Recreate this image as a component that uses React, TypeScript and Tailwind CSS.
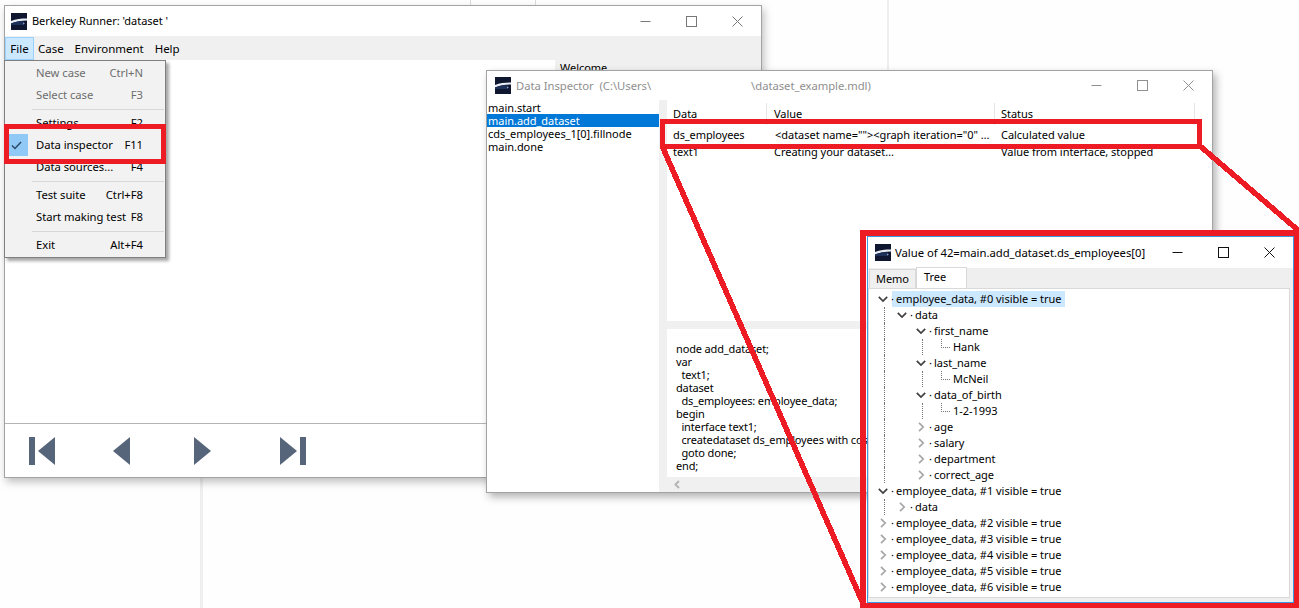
import type { ReactNode } from 'react';

const FONT = "font-['Noto_Sans','Open_Sans',sans-serif]";

function Logo() {
  return (
    <svg viewBox="0 0 16 17" className="h-[17px] w-4 shrink-0">
      <rect width="16" height="17" fill="#0e1630" />
      <path d="M0 8 C5 6 10 5.5 16 5.5 L16 7.5 C10 7.5 5 8.5 0 10.5Z" fill="#e8edf5" />
      <path d="M0 10.5 C5 8.5 9 8 13 8.5 L13 12 L0 12Z" fill="#1d3058" />
      <path d="M12 9.5 L14 10.5 L12 11.5Z" fill="#8aa0c0" />
    </svg>
  );
}

function WindowButtons({ color }: { color: string }) {
  return (
    <div className="flex items-center pr-px" style={{ color }}>
      <div className="flex w-[46px] justify-center">
        <svg width="11" height="11" viewBox="0 0 11 11"><path d="M0.5 5.5H10.5" stroke="currentColor" /></svg>
      </div>
      <div className="flex w-[46px] justify-center">
        <svg width="11" height="11" viewBox="0 0 11 11"><rect x="0.5" y="0.5" width="10" height="10" fill="none" stroke="currentColor" /></svg>
      </div>
      <div className="flex w-[46px] justify-center">
        <svg width="11" height="11" viewBox="0 0 11 11"><path d="M0.5 0.5L10.5 10.5M10.5 0.5L0.5 10.5" stroke="currentColor" /></svg>
      </div>
    </div>
  );
}

type MenuItem = { label?: string; key?: string; disabled?: boolean; checked?: boolean };

const MENU: MenuItem[] = [
  { label: 'New case', key: 'Ctrl+N', disabled: true },
  { label: 'Select case', key: 'F3', disabled: true },
  {},
  { label: 'Settings', key: 'F2' },
  { label: 'Data inspector', key: 'F11', checked: true },
  { label: 'Data sources...', key: 'F4' },
  {},
  { label: 'Test suite', key: 'Ctrl+F8' },
  { label: 'Start making test', key: 'F8' },
  {},
  { label: 'Exit', key: 'Alt+F4' },
];

function FileMenu() {
  return (
    <div className="absolute left-[4px] top-[60px] z-10 w-[162px] border border-[#808080] bg-[#f2f2f2] py-[1px] text-[11.25px] shadow-[3px_3px_3px_rgba(0,0,0,0.35)]">
      {MENU.map((m, i) =>
        m.label ? (
          <div key={i} className={`flex h-[22px] items-center ${m.disabled ? 'text-[#6d6d6d]' : 'text-black'}`}>
            <div className="flex h-[22px] w-[23px] items-center justify-center">
              {m.checked && (
                <div className="flex h-[22px] w-[23px] items-center justify-center bg-[#90c8f6]">
                  <svg width="11" height="9" viewBox="0 0 11 9"><path d="M1 4.5L4 7.5L10 1" fill="none" stroke="#2c4a66" strokeWidth="1.5" /></svg>
                </div>
              )}
            </div>
            <span className="ml-[8px] flex-1 whitespace-nowrap">{m.label}</span>
            <span className="mr-[22px] whitespace-nowrap">{m.key}</span>
          </div>
        ) : (
          <div key={i} className="my-[2.5px] ml-[27px] mr-px h-px bg-[#d7d7d7]" />
        ),
      )}
    </div>
  );
}

function RunnerWindow() {
  return (
    <div className="absolute left-[4px] top-[5px] flex h-[473px] w-[758px] flex-col border border-[#a3a3a3] bg-white shadow-[2px_4px_8px_rgba(0,0,0,0.25)]">
      <div className="flex h-[30px] items-center justify-between bg-white">
        <div className="flex items-center gap-[5px] pl-[6px]">
          <Logo />
          <span>Berkeley Runner: 'dataset '</span>
        </div>
        <WindowButtons color="#777" />
      </div>
      <div className="flex h-[24px] items-center bg-[#f0f0f0] pt-px text-[11.5px]">
        <div className="flex h-[23px] w-[29px] items-center justify-center border border-[#99d1ff] bg-[#cce8ff]">File</div>
        <span className="ml-[4px]">Case</span>
        <span className="ml-[11px]">Environment</span>
        <span className="ml-[11px]">Help</span>
      </div>
      <div className="flex flex-1">
        <div className="w-[550px]" />
        <div className="w-[3px] bg-[#f0f0f0]" />
        <div className="flex-1">
          <div className="flex h-[11px] items-start bg-[#f0f0f0] pl-[2px] leading-[15px]">Welcome</div>
        </div>
      </div>
      <div className="flex h-[54px] items-center border-t border-[#b4b4b4] pl-[24px]">
        <svg width="27" height="28" viewBox="0 0 27 28" fill="#566579"><rect width="6" height="28" /><path d="M9 14L26 0V28Z" /></svg>
        <svg className="ml-[57px]" width="17" height="28" viewBox="0 0 17 28" fill="#566579"><path d="M0 14L17 0V28Z" /></svg>
        <svg className="ml-[64px]" width="17" height="28" viewBox="0 0 17 28" fill="#566579"><path d="M17 14L0 0V28Z" /></svg>
        <svg className="ml-[69px]" width="27" height="28" viewBox="0 0 27 28" fill="#566579"><rect x="20" width="6" height="28" /><path d="M17 14L0 0V28Z" /></svg>
      </div>
    </div>
  );
}

const CODE = [
  'node add_dataset;',
  'var',
  '  text1;',
  'dataset',
  '  ds_employees: employee_data;',
  'begin',
  '  interface text1;',
  '  createdataset ds_employees with cds_employees_1;',
  '  goto done;',
  'end;',
];

const STEPS = ['main.start', 'main.add_dataset', 'cds_employees_1[0].fillnode', 'main.done'];

function InspectorWindow() {
  return (
    <div className="absolute left-[486px] top-[70px] flex h-[423px] w-[727px] flex-col border border-[#a3a3a3] bg-white shadow-[3px_4px_8px_rgba(0,0,0,0.3)]">
      <div className="flex h-[29px] shrink-0 items-center justify-between">
        <div className="flex items-center gap-[5px] pl-[8px] text-[11.25px] text-[#8f8f8f]">
          <Logo />
          <span className="whitespace-pre">Data Inspector  (C:\Users\</span>
          <span className="ml-[95px]">\dataset_example.mdl)</span>
        </div>
        <WindowButtons color="#8f8f8f" />
      </div>
      <div className="flex min-h-0 flex-1">
        <div className="w-[172px] pt-px leading-[13px]">
          {STEPS.map((s, i) => (
            <div key={s} className={`h-[13px] whitespace-nowrap pl-px ${i === 1 ? 'bg-[#0078d7] text-white' : ''}`}>{s}</div>
          ))}
        </div>
        <div className="w-[8px] bg-[#f0f0f0]" />
        <div className="flex min-w-0 flex-1 flex-col">
          <div className="h-[221px] shrink-0 pt-[3px]">
            <div className="flex h-[22px] items-end leading-[15px]">
              <div className="h-[22px] w-[100px] border-r border-[#e5e5e5] pl-[6px] pt-[3px]">Data</div>
              <div className="h-[22px] w-[228px] border-r border-[#e5e5e5] pl-[7px] pt-[3px]">Value</div>
              <div className="h-[22px] w-[200px] border-r border-[#e5e5e5] pl-[6px] pt-[3px]">Status</div>
            </div>
            <div className="mt-[1px] flex h-[17px] items-center whitespace-nowrap">
              <div className="w-[100px] pl-[6px] tracking-[-0.1px]">ds_employees</div>
              <div className="w-[228px] overflow-hidden pl-[8px]">{'<dataset name=""><graph iteration="0" …'}</div>
              <div className="pl-[6px]">Calculated value</div>
            </div>
            <div className="flex h-[17px] items-center whitespace-nowrap">
              <div className="w-[100px] pl-[6px]">text1</div>
              <div className="w-[228px] pl-[7px]">Creating your dataset…</div>
              <div className="pl-[6px]">Value from interface, stopped</div>
            </div>
          </div>
          <div className="h-[8px] shrink-0 bg-[#f0f0f0]" />
          <div className="min-h-0 flex-1 overflow-hidden whitespace-pre pl-[9px] pt-[13px] leading-[13px] tracking-[-0.15px]">
            {CODE.map((c) => <div key={c} className="h-[13px]">{c}</div>)}
          </div>
          <div className="flex h-[15px] shrink-0 items-center bg-[#f0f0f0] pl-[7px]">
            <svg width="6" height="9" viewBox="0 0 6 9"><path d="M5 1L1.5 4.5L5 8" fill="none" stroke="#b5b5b5" strokeWidth="2" /></svg>
          </div>
        </div>
      </div>
    </div>
  );
}

type Row = { text: string; depth: number; open?: boolean; leaf?: boolean; guides?: number[]; selected?: boolean };

const emp = (n: number) => `employee_data, #${n} visible = true`;

const ROWS: Row[] = [
  { text: emp(0), depth: 0, open: true, selected: true },
  { text: 'data', depth: 1, open: true, guides: [0] },
  { text: 'first_name', depth: 2, open: true, guides: [0] },
  { text: 'Hank', depth: 3, leaf: true, guides: [0, 1] },
  { text: 'last_name', depth: 2, open: true, guides: [0] },
  { text: 'McNeil', depth: 3, leaf: true, guides: [0, 1] },
  { text: 'data_of_birth', depth: 2, open: true, guides: [0] },
  { text: '1-2-1993', depth: 3, leaf: true, guides: [0, 1] },
  { text: 'age', depth: 2, guides: [0] },
  { text: 'salary', depth: 2, guides: [0] },
  { text: 'department', depth: 2, guides: [0] },
  { text: 'correct_age', depth: 2, guides: [0] },
  { text: emp(1), depth: 0, open: true },
  { text: 'data', depth: 1, guides: [0] },
  { text: emp(2), depth: 0 },
  { text: emp(3), depth: 0 },
  { text: emp(4), depth: 0 },
  { text: emp(5), depth: 0 },
  { text: emp(6), depth: 0 },
];

const INDENT = ['pl-[9px]', 'pl-[28px]', 'pl-[47px]', 'pl-[84px]'];
const GUIDE = ['left-[15px]', 'left-[53px]'];

function Chevron({ open }: { open?: boolean }) {
  return (
    <span className="flex h-[10px] w-[10px] shrink-0 items-center justify-center">
      {open ? (
        <svg width="10" height="7" viewBox="0 0 10 7"><path d="M0.8 0.8L5 5L9.2 0.8" fill="none" stroke="#404040" strokeWidth="1.7" /></svg>
      ) : (
        <svg width="7" height="10" viewBox="0 0 7 10"><path d="M1 0.8L5.2 5L1 9.2" fill="none" stroke="#a6a6a6" strokeWidth="1.7" /></svg>
      )}
    </span>
  );
}

function TreeRow({ row }: { row: Row }) {
  return (
    <div className={`relative flex h-4 items-center whitespace-nowrap ${INDENT[row.depth]}`}>
      {row.guides?.map((g) => (
        <span key={g} className={`absolute top-0 h-4 border-l border-dotted border-[#777] ${GUIDE[g]}`} />
      ))}
      {row.leaf ? (
        <>
          <span className="absolute left-[72px] top-0 h-[9px] w-[9px] border-b border-l border-dotted border-[#777]" />
          <span>{row.text}</span>
        </>
      ) : (
        <>
          <Chevron open={row.open} />
          <span className={`ml-[4px] flex h-4 items-center pr-[4px] ${row.selected ? 'bg-[#cce8ff]' : ''}`}>
            <span className="w-[4px] -translate-x-px">·</span>
            {row.text}
          </span>
        </>
      )}
    </div>
  );
}

function ValueWindow() {
  return (
    <div className="absolute left-[867px] top-[236px] z-20 flex h-[367px] w-[427px] flex-col border border-[#3f97de] bg-[#efefef]">
      <div className="flex h-[31px] shrink-0 items-center justify-between bg-white">
        <div className="flex items-center gap-[4px] whitespace-nowrap pl-[7px] text-[11.3px]">
          <Logo />
          <span>Value of 42=main.add_dataset.ds_employees[0]</span>
        </div>
        <WindowButtons color="#111" />
      </div>
      <div className="flex h-[20px] shrink-0 items-end pl-px">
        <div className="flex h-[19px] w-[47px] items-center justify-center border border-b-0 border-[#d9d9d9] bg-[#f0f0f0]">Memo</div>
        <div className="flex h-[21px] w-[51px] items-start border border-b-0 border-[#d9d9d9] bg-white pl-[7px] leading-[17px]">Tree</div>
      </div>
      <div className="mb-[4px] mr-[3px] flex-1 overflow-hidden border border-[#d9d9d9] bg-white pt-[2px]">
        {ROWS.map((r, i) => <TreeRow key={i} row={r} />)}
      </div>
    </div>
  );
}

function Callout({ className }: { className: string }): ReactNode {
  return <div className={`absolute border-[5px] border-[#ed1c24] ${className}`} />;
}

export default function App() {
  return (
    <div className={`relative h-[608px] w-[1299px] overflow-hidden bg-[#fefefe] text-[11px] leading-4 tracking-[-0.03px] text-black ${FONT}`}>
      <div className="absolute left-[200px] top-[477px] h-[131px] w-[3px] bg-[#efefef]" />
      <div className="absolute left-[470px] top-0 h-[6px] w-px bg-[#dcdcdc]" />
      <div className="absolute left-[535px] top-0 h-[6px] w-px bg-[#dcdcdc]" />
      <div className="absolute left-[887px] top-0 h-[71px] w-[2px] bg-[#efefef]" />

      <RunnerWindow />
      <InspectorWindow />
      <FileMenu />

      <Callout className="left-[4px] top-[124px] z-10 h-[40px] w-[162px]" />
      <Callout className="left-[660px] top-[119px] h-[30px] w-[542px]" />
      <svg className="absolute left-0 top-0" width="1299" height="608" viewBox="0 0 1299 608" shapeRendering="crispEdges">
        <path d="M663 148L865 608" stroke="#ed1c24" strokeWidth="5.5" fill="none" />
        <path d="M1200 146L1299 231" stroke="#ed1c24" strokeWidth="5.5" fill="none" />
      </svg>

      <ValueWindow />
      <div className="absolute left-[860px] top-[230px] z-20 h-[378px] w-[439px] border-[6px] border-r-[5px] border-b-[5px] border-[#ed1c24]" />
    </div>
  );
}
